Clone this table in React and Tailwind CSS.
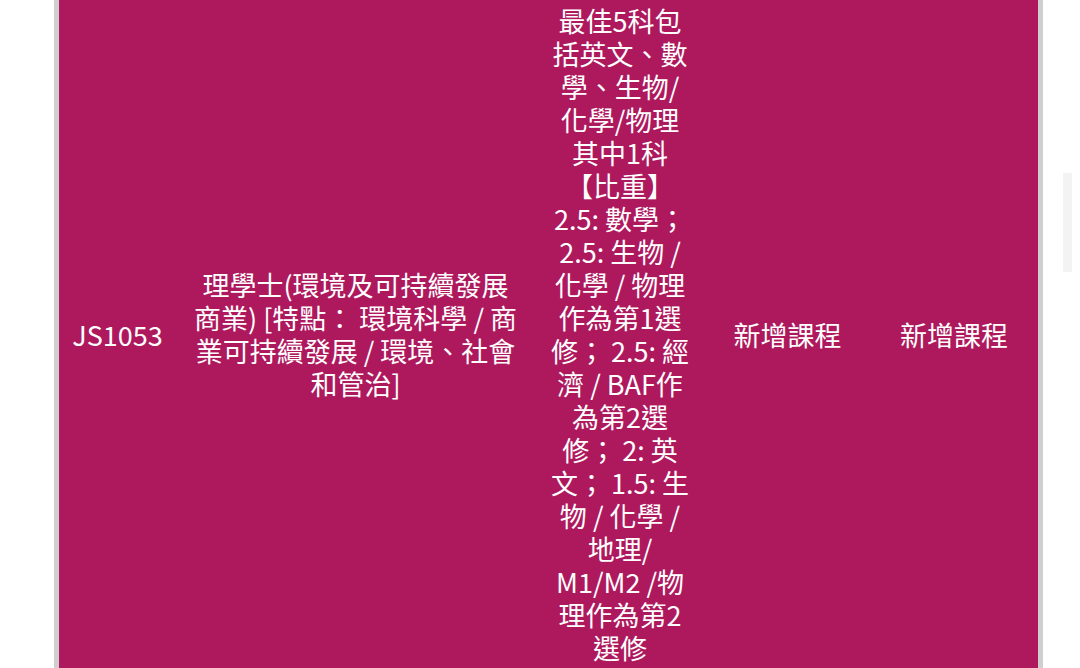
export default function App() {
  const font = {
    fontFamily: '"Noto Sans CJK TC", "Noto Sans CJK SC", sans-serif',
  };

  return (
    <div
      className="w-[1080px] h-[668px] bg-white overflow-hidden flex"
      style={font}
    >
      <div className="w-[54px] shrink-0" />
      <div className="w-[5px] shrink-0 bg-[#cfcfcf]" />
      <div className="grid grid-cols-[117px_359px_170px_165px_168px] h-[668px] bg-[#ae195e] text-white text-[27px] leading-[33px] text-center items-center">
        <div className="px-2">JS1053</div>
        <div className="px-[15px]">
          理學士(環境及可持續發展商業) [特點：&nbsp;環境科學 / 商業可持續發展 / 環境、社會和管治]
        </div>
        <div className="px-[15px]">
          最佳5科包括英文、數學、生物/化學/物理其中1科【比重】2.5: 數學；
          2.5: 生物 / 化學 / 物理作為第1選修；&nbsp;2.5: 經濟 / BAF作為第2選修；&nbsp;2: 英文；&nbsp;1.5:
          生物 / 化學 / 地理/ M1/M2 /物理作為第2選修
        </div>
        <div className="px-2">新增課程</div>
        <div className="px-2">新增課程</div>
      </div>
      <div className="w-[5px] shrink-0 bg-[#cfcfcf]" />
      <div className="flex-1 flex justify-end pr-[8px]">
        <div className="w-[9px] h-[99px] mt-[173px] bg-[#f3f3f3]" />
      </div>
    </div>
  );
}
